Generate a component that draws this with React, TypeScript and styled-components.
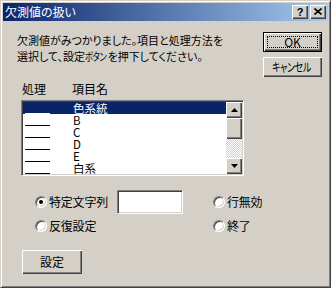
import React from 'react';
import styled, { createGlobalStyle, css } from 'styled-components';

const GlobalStyle = createGlobalStyle`
  *, *::before, *::after {
    box-sizing: border-box;
  }

  body {
    margin: 0;
    padding: 0;
    background: #d4d0c8;
    font-family: 'Noto Sans CJK JP', 'Noto Sans', sans-serif;
    font-size: 12px;
    color: #000;
  }
`;

const FONT = `'Noto Sans CJK JP', 'Noto Sans', sans-serif`;

const Window = styled.div`
  width: 331px;
  height: 288px;
  background: #d4d0c8;
  border: 1px solid;
  border-color: #d4d0c8 #404040 #404040 #d4d0c8;
  box-shadow: inset 1px 1px #ffffff, inset -1px -1px #808080;
  padding: 2px;
  display: flex;
  flex-direction: column;
  font-family: ${FONT};
  font-feature-settings: 'palt';
`;

const TitleBar = styled.div`
  height: 18px;
  background: linear-gradient(to right, #0a246a, #a6caf0);
  display: flex;
  align-items: center;
  justify-content: space-between;
  padding: 0 2px 0 2px;
`;

const Title = styled.span`
  color: #fff;
  font-size: 12px;
  line-height: 18px;
`;

const CaptionGroup = styled.div`
  display: flex;
  gap: 2px;
`;

const CaptionButton = styled.div`
  width: 16px;
  height: 14px;
  background: #d4d0c8;
  box-shadow: inset 1px 1px #ffffff, inset -1px -1px #404040, inset -2px -2px #808080;
  display: flex;
  align-items: center;
  justify-content: center;
  font-family: 'Liberation Sans', sans-serif;
  font-weight: bold;
  font-size: 11px;
  line-height: 14px;
  padding-bottom: 1px;
`;

const TopRow = styled.div`
  display: flex;
  justify-content: space-between;
  padding-top: 11px;
`;

const Message = styled.p`
  margin: 0 0 0 14px;
  font-size: 11px;
  line-height: 16px;
  letter-spacing: 0;
  white-space: nowrap;
`;

// condensed katakana, like the half-width forms of the original
const Narrow = styled.span<{ $pull?: number }>`
  display: inline-block;
  transform: scaleX(0.75);
  transform-origin: left center;
  letter-spacing: -0.5px;
  margin-right: ${(p) => -(p.$pull ?? 0)}px;
`;

const ButtonColumn = styled.div`
  display: flex;
  flex-direction: column;
  gap: 5px;
  margin-right: 6px;
`;

const Button = styled.button<{ $default?: boolean; $w?: number; $h?: number }>`
  position: relative;
  width: ${(p) => p.$w ?? 59}px;
  height: ${(p) => p.$h ?? 20}px;
  padding: 0;
  background: #d4d0c8;
  font-family: ${FONT};
  font-feature-settings: 'palt';
  font-size: 12px;
  line-height: 1;
  color: #000;
  border: none;
  box-shadow: inset 1px 1px #ffffff, inset -1px -1px #404040, inset -2px -2px #808080;

  ${(p) =>
    p.$default &&
    css`
      border: 1px solid #000;
      &::after {
        content: '';
        position: absolute;
        inset: 3px;
        border: 1px dotted #000;
      }
    `}
`;

const Headers = styled.div`
  display: grid;
  grid-template-columns: 50px auto;
  margin: 4px 0 0 19px;
  font-size: 12px;
  line-height: 15px;
`;

const ListBox = styled.div`
  margin: 4px 0 0 18px;
  width: 223px;
  height: 76px;
  border: 1px solid;
  border-color: #808080 #ffffff #ffffff #808080;
  box-shadow: inset 1px 1px #404040, inset -1px -1px #d4d0c8;
  background: #fff;
  padding: 1px;
  display: flex;
  overflow: hidden;
`;

const Rows = styled.div`
  flex: 1;
  overflow: hidden;
`;

const Row = styled.div<{ $selected?: boolean }>`
  height: 12px;
  display: grid;
  grid-template-columns: 50px auto;
  align-items: center;
  background: ${(p) => (p.$selected ? '#0a246a' : '#ffffff')};
  color: ${(p) => (p.$selected ? '#ffffff' : '#000000')};
  font-size: 11.5px;
  line-height: 12px;
`;

const Blank = styled.span<{ $selected?: boolean }>`
  align-self: end;
  margin: 0 0 0 2px;
  width: 25px;
  height: 1px;
  background: ${(p) => (p.$selected ? '#ffffff' : '#000000')};
`;

const Scrollbar = styled.div`
  width: 16px;
  display: flex;
  flex-direction: column;
  background: repeating-conic-gradient(#d4d0c8 0 25%, #ffffff 0 50%) 0 0 / 2px 2px;
`;

const ScrollButton = styled.div<{ $h?: number }>`
  width: 16px;
  height: ${(p) => p.$h ?? 16}px;
  flex-shrink: 0;
  background: #d4d0c8;
  box-shadow: inset 1px 1px #ffffff, inset -1px -1px #404040, inset -2px -2px #808080;
  display: flex;
  align-items: center;
  justify-content: center;
`;

const Track = styled.div`
  flex: 1;
`;

const OptionGrid = styled.div`
  display: grid;
  grid-template-columns: 82px 96px auto;
  grid-template-rows: 24px 24px;
  align-items: center;
  margin: 14px 0 0 32px;
`;

const RadioItem = styled.label`
  display: flex;
  align-items: center;
  gap: 2px;
  font-size: 12px;
  line-height: 14px;
  letter-spacing: -0.2px;
`;

const RadioCircle = styled.span<{ $checked?: boolean }>`
  position: relative;
  width: 12px;
  height: 12px;
  border-radius: 50%;
  border: 1px solid;
  border-color: #808080 #ffffff #ffffff #808080;
  box-shadow: inset 1px 1px #404040, inset -1px -1px #d4d0c8;
  background: #fff;

  &::after {
    content: '';
    display: ${(p) => (p.$checked ? 'block' : 'none')};
    position: absolute;
    left: 3px;
    top: 3px;
    width: 4px;
    height: 4px;
    border-radius: 50%;
    background: #000;
  }
`;

const TextBox = styled.div`
  width: 66px;
  height: 24px;
  background: #fff;
  border: 1px solid;
  border-color: #808080 #ffffff #ffffff #808080;
  box-shadow: inset 1px 1px #404040, inset -1px -1px #d4d0c8;
`;

const Footer = styled.div`
  margin: 12px 0 0 19px;
`;

const Arrow = ({ up }: { up?: boolean }) => (
  <svg width="7" height="4" viewBox="0 0 7 4">
    <polygon points={up ? '3.5,0 7,4 0,4' : '0,0 7,0 3.5,4'} fill="#000" />
  </svg>
);

const Radio = ({ label, checked }: { label: string; checked?: boolean }) => (
  <RadioItem>
    <RadioCircle $checked={checked} />
    {label}
  </RadioItem>
);

const items = ['色系統', 'B', 'C', 'D', 'E', '白系'];

export default function App() {
  return (
    <>
      <GlobalStyle />
      <Window>
        <TitleBar>
          <Title>欠測値の扱い</Title>
          <CaptionGroup>
            <CaptionButton>?</CaptionButton>
            <CaptionButton>
              <svg width="8" height="7" viewBox="0 0 8 7">
                <path d="M0.5 0.5 L7.5 6.5 M7.5 0.5 L0.5 6.5" stroke="#000" strokeWidth="1.6" />
              </svg>
            </CaptionButton>
          </CaptionGroup>
        </TitleBar>

        <TopRow>
          <Message>
            欠測値がみつかりました。項目と処理方法を
            <br />
            選択して、設定<Narrow $pull={6}>ボタン</Narrow>を押下してください。
          </Message>
          <ButtonColumn>
            <Button $default>OK</Button>
            <Button>
              <Narrow $pull={10}>キャンセル</Narrow>
            </Button>
          </ButtonColumn>
        </TopRow>

        <Headers>
          <span>処理</span>
          <span>項目名</span>
        </Headers>

        <ListBox>
          <Rows>
            {items.map((name, i) => (
              <Row key={name} $selected={i === 0}>
                <Blank $selected={i === 0} />
                <span>{name}</span>
              </Row>
            ))}
          </Rows>
          <Scrollbar>
            <ScrollButton>
              <Arrow up />
            </ScrollButton>
            <ScrollButton $h={21} />
            <Track />
            <ScrollButton>
              <Arrow />
            </ScrollButton>
          </Scrollbar>
        </ListBox>

        <OptionGrid>
          <Radio label="特定文字列" checked />
          <TextBox />
          <Radio label="行無効" />
          <Radio label="反復設定" />
          <span />
          <Radio label="終了" />
        </OptionGrid>

        <Footer>
          <Button $w={60} $h={24}>
            設定
          </Button>
        </Footer>
      </Window>
    </>
  );
}
